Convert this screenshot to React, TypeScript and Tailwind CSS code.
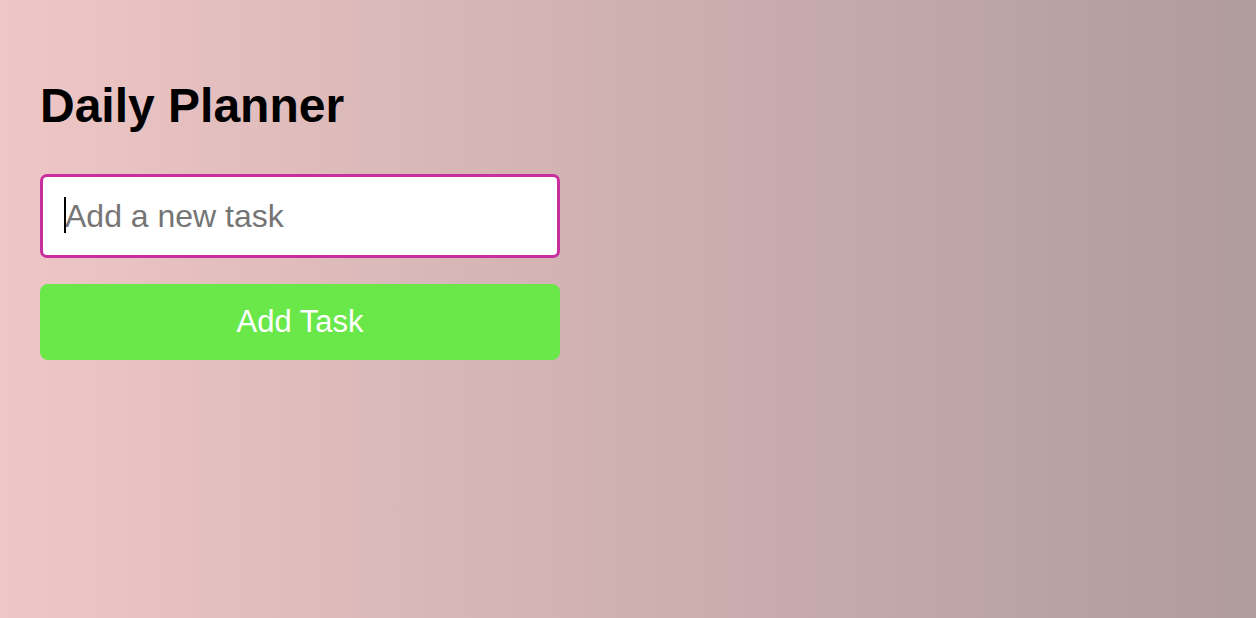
import React, { useState } from "react";

function App() {
  const [task, setTask] = useState("");

  return (
    <div className="min-h-screen w-full bg-gradient-to-r from-[#efc6c6] to-[#b09b9d] px-10 pt-[82px] font-['Liberation_Sans',Arial,sans-serif]">
      <div className="w-[520px]">
        <h1 className="text-[48px] font-bold leading-none text-black">
          Daily Planner
        </h1>
        <div className="relative mt-[44px]">
          <input
            autoFocus
            value={task}
            onChange={(e) => setTask(e.target.value)}
            placeholder="Add a new task"
            className="block h-[84px] w-full rounded-[7px] border-[3px] border-[#c72fa1] bg-white px-[22px] text-[32px] text-black placeholder:text-[#757575] outline-none caret-black"
          />
          {/* caret shown in the screenshot */}
          {task === "" && (
            <span className="pointer-events-none absolute left-[24px] top-[23px] h-[36px] w-[2px] bg-black" />
          )}
        </div>
        <button className="mt-[26px] block h-[76px] w-full rounded-[8px] bg-[#6ae84a] text-[31px] text-white">
          Add Task
        </button>
      </div>
    </div>
  );
}

export default App;
